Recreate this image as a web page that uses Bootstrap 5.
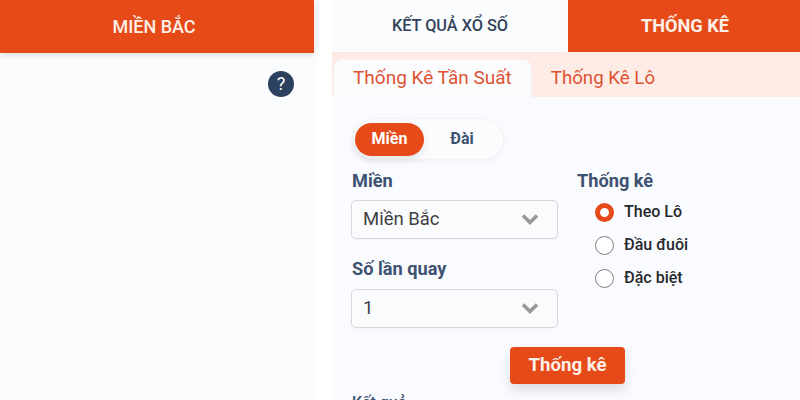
<!DOCTYPE html>
<html lang="vi">
<head>
<meta charset="utf-8">
<title>Thống kê</title>
<link href="https://cdn.jsdelivr.net/npm/bootstrap@5.3.0/dist/css/bootstrap.min.css" rel="stylesheet">
<style>
html, body { height: 100%; overflow: hidden; }
body { background: #fff; font-family: Roboto, "Noto Sans", sans-serif; color: #34495e; }
.page-wrap { width: 800px; height: 400px; gap: 18px; }
.left-pane { width: 314px; background: #fafcfe; flex: none; box-shadow: 2px 0 6px rgba(0,0,0,.02); }
.right-pane { width: 468px; background: #f9fbfe; flex: none; overflow: hidden; }
.head-orange { background: #e64a19; color: #fdf0e8; height: 53px; font-size: 18px; font-weight: 500; padding-right: 6px; box-shadow: 0 2px 6px rgba(0,0,0,.12); }
.help-row { padding: 18px 20px 0 0; }
.help-dot { width: 26px; height: 26px; background: #2c4060; color: #fff; font-size: 18px; font-weight: 400; line-height: 1; }
.main-tabs { height: 52px; }
.main-tab { height: 52px; font-size: 16.3px; font-weight: 500; }
.tab-light { width: 236px; color: #34425a; background: #fafcfe; box-shadow: -2px 0 4px rgba(0,0,0,.03); }
.tab-strong { flex: 1; background: #e64a19; color: #fdf0e8; font-size: 18.2px; font-weight: 700; padding-left: 2px; }
.sub-tabs { background: #fdece6; height: 45px; padding: 8px 0 0 2px; }
.sub-tab { font-size: 19px; color: #de5233; padding: 6px 19px 0; height: 37px; line-height: 24px; }
.sub-active { background: #fafcfe; border-radius: 8px 8px 0 0; }
.sub-plain { padding-left: 20px; font-size: 18.7px; }
.form-zone { padding: 21px 0 0 20px; }
.pill-box { width: 152px; height: 42px; padding: 4px 2px; background: #fafcfe; border: 1px solid #f2f3f5; box-shadow: 0 2px 5px rgba(0,0,0,.04); }
.pill-on { width: 69px; height: 33px; background: #e64a19; color: #fff; font-size: 16px; font-weight: 700; box-shadow: 0 3px 8px rgba(0,0,0,.1); }
.pill-off { flex: 1; font-size: 16px; font-weight: 700; color: #3d5270; padding-right: 1px; }
.form-cols { gap: 19px; margin-top: 9px; margin-left: -1px; }
.col-select { width: 207px; flex: none; }
.field-label { font-size: 18.2px; font-weight: 700; color: #3d5270; line-height: 24px; margin: 0 0 7px; }
.col-select .field-label { padding-left: 1px; }
.fake-select { height: 39px; border: 1px solid #d6d8dc; border-radius: 5px; background: #fafbfd; padding: 0 18px 0 11px; font-size: 18.5px; color: #3f3f3f; box-shadow: 0 1px 2px rgba(0,0,0,.03); }
.spaced-label { margin-top: 18px; margin-bottom: 8px; }
.gap-select { margin-bottom: 7px; }
.radio-list { padding: 1px 0 0 18px; gap: 11px; }
.radio-item { font-size: 16px; font-weight: 500; color: #26282c; height: 22px; gap: 10px; }
.radio-dot { width: 19px; height: 19px; border: 1px solid #7d7f83; background: #fff; flex: none; }
.radio-on { border: 5px solid #e64a19; }
.btn-wrap { margin-top: 19px; padding-left: 158px; }
.btn-stat { width: 115px; height: 37px; background: #e64a19; color: #fdf0e8; border: 0; border-radius: 4px; font-size: 18.6px; font-weight: 700; padding: 0; box-shadow: 0 6px 12px rgba(0,0,0,.12); }
.result-cut { font-size: 16px; font-weight: 500; color: #3d5270; margin-top: 9px; line-height: 20px; }
</style>
</head>
<body>
<div class="page-wrap d-flex">
  <div class="left-pane">
    <div class="head-orange d-flex align-items-center justify-content-center">MIỀN BẮC</div>
    <div class="help-row d-flex justify-content-end">
      <span class="help-dot rounded-circle d-flex align-items-center justify-content-center">?</span>
    </div>
  </div>
  <div class="right-pane">
    <div class="main-tabs d-flex">
      <div class="main-tab tab-light d-flex align-items-center justify-content-center">KẾT QUẢ XỔ SỐ</div>
      <div class="main-tab tab-strong d-flex align-items-center justify-content-center">THỐNG KÊ</div>
    </div>
    <div class="sub-tabs d-flex">
      <div class="sub-tab sub-active">Thống Kê Tần Suất</div>
      <div class="sub-tab sub-plain">Thống Kê Lô</div>
    </div>
    <div class="form-zone">
      <div class="pill-box rounded-pill d-flex align-items-center">
        <div class="pill-on rounded-pill d-flex align-items-center justify-content-center">Miền</div>
        <div class="pill-off d-flex align-items-center justify-content-center">Đài</div>
      </div>
      <div class="form-cols d-flex">
        <div class="col-select">
          <div class="field-label">Miền</div>
          <div class="fake-select d-flex align-items-center justify-content-between gap-select">
            <span>Miền Bắc</span>
            <svg width="18" height="12" viewBox="0 1 18 12"><path d="M2 2.5 9 9.5 16 2.5" fill="none" stroke="#999" stroke-width="3.6"/></svg>
          </div>
          <div class="field-label spaced-label">Số lần quay</div>
          <div class="fake-select d-flex align-items-center justify-content-between">
            <span>1</span>
            <svg width="18" height="12" viewBox="0 1 18 12"><path d="M2 2.5 9 9.5 16 2.5" fill="none" stroke="#999" stroke-width="3.6"/></svg>
          </div>
        </div>
        <div>
          <div class="field-label">Thống kê</div>
          <div class="radio-list d-flex flex-column">
            <div class="radio-item d-flex align-items-center"><span class="radio-dot radio-on rounded-circle"></span>Theo Lô</div>
            <div class="radio-item d-flex align-items-center"><span class="radio-dot rounded-circle"></span>Đầu đuôi</div>
            <div class="radio-item d-flex align-items-center"><span class="radio-dot rounded-circle"></span>Đặc biệt</div>
          </div>
        </div>
      </div>
      <div class="btn-wrap"><button class="btn-stat btn" type="button">Thống kê</button></div>
      <div class="result-cut">Kết quả</div>
    </div>
  </div>
</div>
<script src="https://cdn.jsdelivr.net/npm/bootstrap@5.3.0/dist/js/bootstrap.bundle.min.js"></script>
</body>
</html>
